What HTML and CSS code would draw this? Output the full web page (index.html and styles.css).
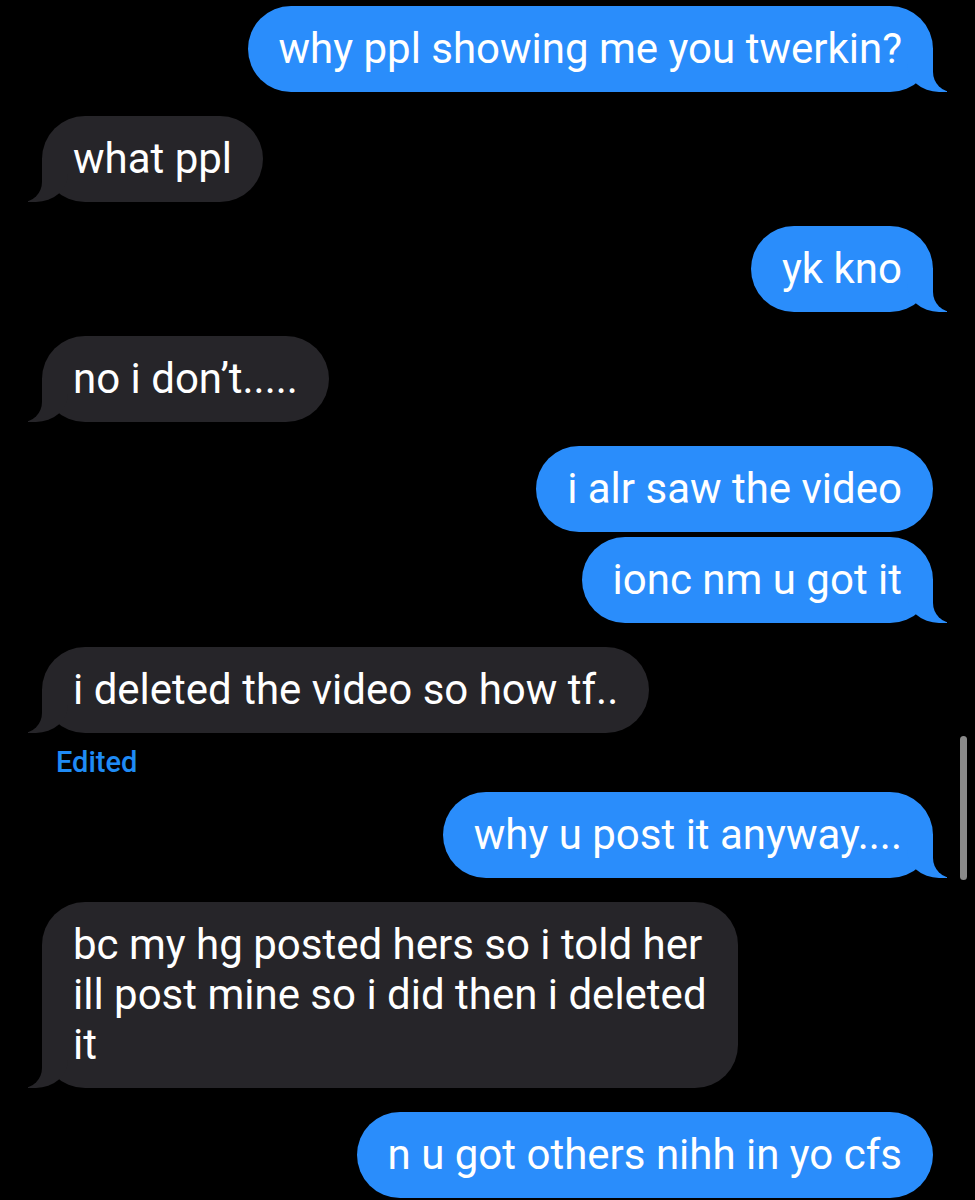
FILE: index.html
```html
<!DOCTYPE html>
<html>
<head>
<meta charset="utf-8">
<link rel="stylesheet" href="styles.css">
</head>
<body>
<div class="thread">
  <div class="msg sent tail">why ppl showing me you twerkin?</div>
  <div class="msg recv tail">what ppl</div>
  <div class="msg sent tail">yk kno</div>
  <div class="msg recv tail">no i don’t.....</div>
  <div class="msg sent">i alr saw the video</div>
  <div class="msg sent tail grouped">ionc nm u got it</div>
  <div class="msg recv tail">i deleted the video so how tf..</div>
  <div class="edited">Edited</div>
  <div class="msg sent tail after-edit">why u post it anyway....</div>
  <div class="msg recv tail">bc my hg posted hers so i told her<br>ill post mine so i did then i deleted<br>it</div>
  <div class="msg sent">n u got others nihh in yo cfs</div>
</div>
<div class="scroll-indicator"></div>
</body>
</html>
```
FILE: styles.css
```css
html, body {
  margin: 0;
  padding: 0;
  background: #000;
}
body {
  width: 975px;
  height: 1200px;
  overflow: hidden;
  position: relative;
  font-family: Roboto, "Liberation Sans", sans-serif;
}
.thread {
  display: flex;
  flex-direction: column;
  padding: 6px 42px 0 42px;
}
.msg {
  position: relative;
  font-size: 42px;
  line-height: 50px;
  padding: 18px 31px;
  border-radius: 43px;
  color: #fff;
  margin-top: 24px;
  max-width: 740px;
  box-sizing: border-box;
}
.msg:first-child { margin-top: 0; }
.msg.grouped { margin-top: 5px; }
.msg.after-edit { margin-top: 13px; }
.sent {
  align-self: flex-end;
  background: #2a8dfb;
}
.recv {
  align-self: flex-start;
  background: #262529;
}
.tail::before,
.tail::after {
  content: "";
  position: absolute;
  bottom: 0;
  height: 44px;
}
.sent.tail::before {
  right: -14px;
  width: 40px;
  background: #2a8dfb;
  border-bottom-left-radius: 32px 28px;
}
.sent.tail::after {
  right: -52px;
  width: 52px;
  background: #000;
  border-bottom-left-radius: 20px;
}
.recv.tail::before {
  left: -14px;
  width: 40px;
  background: #262529;
  border-bottom-right-radius: 32px 28px;
}
.recv.tail::after {
  left: -52px;
  width: 52px;
  background: #000;
  border-bottom-right-radius: 20px;
}
.edited {
  align-self: flex-start;
  color: #1f8bf5;
  font-size: 29px;
  font-weight: 500;
  line-height: 34px;
  padding: 12px 0 0 14px;
}
.scroll-indicator {
  position: absolute;
  left: 960px;
  top: 736px;
  width: 7px;
  height: 144px;
  border-radius: 4px;
  background: #8a8a8a;
}
```
